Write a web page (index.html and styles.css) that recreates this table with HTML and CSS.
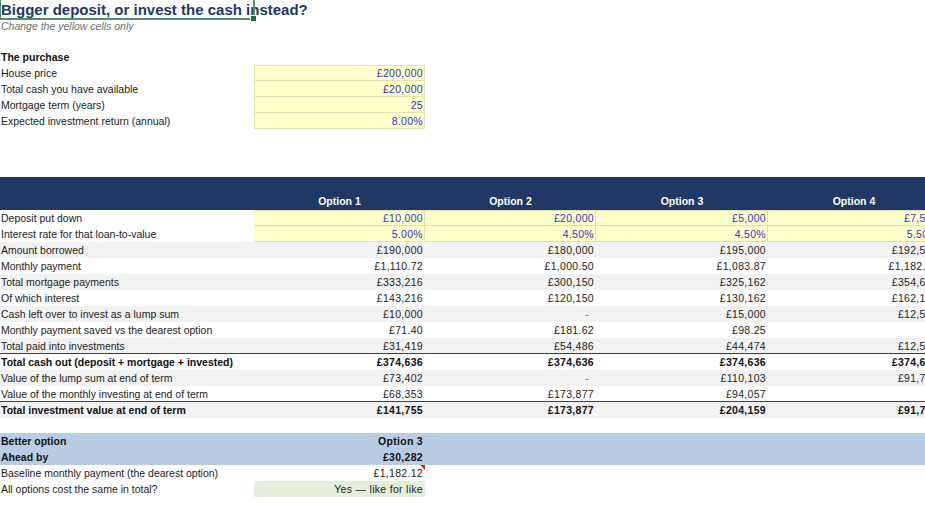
FILE: index.html
```html
<!DOCTYPE html>
<html lang="en">
<head>
<meta charset="utf-8">
<title>Bigger deposit, or invest the cash instead?</title>
<link rel="stylesheet" href="styles.css">
</head>
<body>
<div class="sheet">
  <div class="title-row">
    <span class="title">Bigger deposit, or invest the cash instead?</span>
    <span class="selection"><span class="handle"></span></span>
  </div>
  <div class="subtitle">Change the yellow cells only</div>
  <div class="gap-15"></div>

  <div class="row"><div class="label bold">The purchase</div></div>
  <div class="inputs">
    <div class="row"><div class="label">House price</div><div class="val input top">£200,000</div></div>
    <div class="row"><div class="label">Total cash you have available</div><div class="val input">£20,000</div></div>
    <div class="row"><div class="label">Mortgage term (years)</div><div class="val input">25</div></div>
    <div class="row"><div class="label">Expected investment return (annual)</div><div class="val input">8.00%</div></div>
  </div>
  <div class="gap-48"></div>

  <div class="row header">
    <div class="label"></div>
    <div class="opt">Option 1</div>
    <div class="opt">Option 2</div>
    <div class="opt">Option 3</div>
    <div class="opt">Option 4</div>
  </div>
  <div class="row"><div class="label">Deposit put down</div><div class="val input">£10,000</div><div class="val input">£20,000</div><div class="val input">£5,000</div><div class="val input">£7,500</div></div>
  <div class="row"><div class="label">Interest rate for that loan-to-value</div><div class="val input">5.00%</div><div class="val input">4.50%</div><div class="val input">4.50%</div><div class="val input">5.50%</div></div>
  <div class="row band"><div class="label">Amount borrowed</div><div class="val">£190,000</div><div class="val">£180,000</div><div class="val">£195,000</div><div class="val">£192,500</div></div>
  <div class="row"><div class="label">Monthly payment</div><div class="val">£1,110.72</div><div class="val">£1,000.50</div><div class="val">£1,083.87</div><div class="val">£1,182.12</div></div>
  <div class="row band"><div class="label">Total mortgage payments</div><div class="val">£333,216</div><div class="val">£300,150</div><div class="val">£325,162</div><div class="val">£354,636</div></div>
  <div class="row"><div class="label">Of which interest</div><div class="val">£143,216</div><div class="val">£120,150</div><div class="val">£130,162</div><div class="val">£162,136</div></div>
  <div class="row band"><div class="label">Cash left over to invest as a lump sum</div><div class="val">£10,000</div><div class="val dash">-</div><div class="val">£15,000</div><div class="val">£12,500</div></div>
  <div class="row"><div class="label">Monthly payment saved vs the dearest option</div><div class="val">£71.40</div><div class="val">£181.62</div><div class="val">£98.25</div><div class="val dash">-</div></div>
  <div class="row band rule"><div class="label">Total paid into investments</div><div class="val">£31,419</div><div class="val">£54,486</div><div class="val">£44,474</div><div class="val">£12,500</div></div>
  <div class="row bold"><div class="label">Total cash out (deposit + mortgage + invested)</div><div class="val">£374,636</div><div class="val">£374,636</div><div class="val">£374,636</div><div class="val">£374,636</div></div>
  <div class="row band"><div class="label">Value of the lump sum at end of term</div><div class="val">£73,402</div><div class="val dash">-</div><div class="val">£110,103</div><div class="val">£91,753</div></div>
  <div class="row rule"><div class="label">Value of the monthly investing at end of term</div><div class="val">£68,353</div><div class="val">£173,877</div><div class="val">£94,057</div><div class="val dash">-</div></div>
  <div class="row band bold"><div class="label">Total investment value at end of term</div><div class="val">£141,755</div><div class="val">£173,877</div><div class="val">£204,159</div><div class="val">£91,753</div></div>
  <div class="gap-15"></div>

  <div class="summary">
    <div class="row bold"><div class="label">Better option</div><div class="val">Option 3</div></div>
    <div class="row bold"><div class="label">Ahead by</div><div class="val">£30,282</div></div>
  </div>
  <div class="row"><div class="label">Baseline monthly payment (the dearest option)</div><div class="val comment">£1,182.12<span class="note"></span></div></div>
  <div class="row"><div class="label">All options cost the same in total?</div><div class="val check">Yes — like for like</div></div>
</div>
</body>
</html>
```
FILE: styles.css
```css
html, body {
  margin: 0;
  padding: 0;
  background: #ffffff;
  overflow: hidden;
}

body {
  font-family: "Liberation Sans", Arial, sans-serif;
  font-size: 10.5px;
  color: #1c1c1c;
}

.sheet {
  width: 940px;
}

.title-row {
  position: relative;
  height: 19px;
  line-height: 19px;
}

.title {
  font-size: 15px;
  font-weight: bold;
  color: #1f3864;
  padding-left: 1px;
  white-space: nowrap;
}

.selection {
  position: absolute;
  left: 0;
  top: -1px;
  width: 252px;
  height: 18px;
  border: 1px solid #4f8f6d;
  border-right-width: 2px;
  border-bottom-width: 2px;
}

.handle {
  position: absolute;
  right: -4px;
  bottom: -4px;
  width: 5px;
  height: 5px;
  background: #1e6b43;
  border: 1px solid #ffffff;
}

.subtitle {
  height: 15px;
  line-height: 15px;
  font-style: italic;
  color: #707070;
  padding-left: 1px;
}

.gap-15 { height: 15px; }
.gap-48 { height: 48px; }

.row {
  display: grid;
  grid-template-columns: 254px 171px 171px 172px 172px;
  height: 16px;
  line-height: 16px;
}

.label {
  padding-left: 1px;
  white-space: nowrap;
}

.bold {
  font-weight: bold;
  color: #111111;
}

.val {
  text-align: right;
  padding-right: 2px;
  white-space: nowrap;
  overflow: hidden;
  letter-spacing: 0.3px;
}

.input {
  background: #ffffcc;
  color: #3434c4;
  box-shadow: inset -1px -1px 0 #e4e0b0;
}

.input.top {
  box-shadow: inset -1px -1px 0 #e4e0b0, inset 0 1px 0 #e4e0b0;
}

.inputs .input {
  box-shadow: inset -1px -1px 0 #e4e0b0, inset 1px 0 0 #e4e0b0;
}

.inputs .input.top {
  box-shadow: inset -1px -1px 0 #e4e0b0, inset 1px 1px 0 #e4e0b0;
}

.header {
  height: 33px;
  line-height: 16px;
  background: #1f3864;
  color: #ffffff;
  font-weight: bold;
  align-items: end;
  padding-bottom: 1px;
  box-sizing: border-box;
}

.opt {
  text-align: center;
}

.header + .row .input {
  box-shadow: inset -1px -1px 0 #e4e0b0, inset 0 1px 0 #e4e0b0;
}

.header + .row .input:first-of-type,
.header + .row + .row .input:first-of-type {
  box-shadow: inset -1px -1px 0 #e4e0b0, inset 1px 0 0 #e4e0b0;
}

.band {
  background: #f2f2f2;
}

.rule {
  box-shadow: inset 0 -1px 0 #2c4170;
}

.dash {
  padding-right: 7px;
  color: #7a7a7a;
}

.summary {
  background: #b8cce4;
}

.comment {
  position: relative;
}

.note {
  position: absolute;
  right: 0;
  top: 0;
  width: 0;
  height: 0;
  border-top: 5px solid #e0201c;
  border-left: 5px solid transparent;
}

.check {
  background: #e2efda;
  color: #1c1c1c;
}
```
